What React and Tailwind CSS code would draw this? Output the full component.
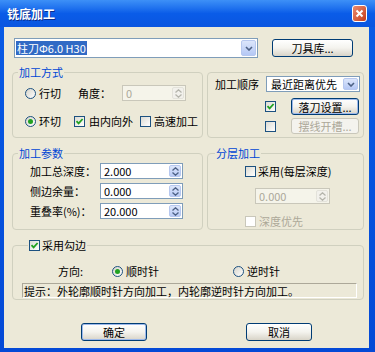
import React from "react";

const FONT = { fontFamily: '"Noto Sans CJK SC", "Noto Sans", sans-serif' };

function Radio({ checked, children, className = "" }) {
  return (
    <div className={"flex items-center gap-[3px] " + className}>
      <span className="w-[11px] h-[11px] rounded-full border border-[#1C5180] bg-gradient-to-br from-[#D6D4CA] to-white flex items-center justify-center shrink-0">
        {checked && <span className="w-[5px] h-[5px] rounded-full bg-[#21A121]" />}
      </span>
      <span>{children}</span>
    </div>
  );
}

function Check({ checked, disabled }) {
  return (
    <span
      className={
        "w-[11px] h-[11px] border flex items-center justify-center shrink-0 " +
        (disabled
          ? "border-[#C9C7BA] bg-white"
          : "border-[#1C5180] bg-gradient-to-br from-[#DCDBD3] to-white")
      }
    >
      {checked && (
        <svg width="9" height="9" viewBox="0 0 9 9">
          <path d="M1.5 4.2 L3.6 6.4 L7.6 2" fill="none" stroke="#21A121" strokeWidth="1.8" />
        </svg>
      )}
    </span>
  );
}

function SpinArrows({ disabled }) {
  const c = disabled ? "#B5B5AC" : "#4D6185";
  return (
    <div
      className={
        "w-[12px] h-full flex flex-col rounded-[2px] border " +
        (disabled ? "border-[#E3E2DA] bg-[#F2F1EC]" : "border-[#B7C8EF] bg-gradient-to-b from-[#DCE6FB] to-[#B9CBF5]")
      }
    >
      <div className="flex-1 flex items-center justify-center">
        <svg width="7" height="4" viewBox="0 0 7 4">
          <path d="M0.5 3.5 L3.5 0.8 L6.5 3.5" fill="none" stroke={c} strokeWidth="1.3" />
        </svg>
      </div>
      <div className="flex-1 flex items-center justify-center">
        <svg width="7" height="4" viewBox="0 0 7 4">
          <path d="M0.5 0.5 L3.5 3.2 L6.5 0.5" fill="none" stroke={c} strokeWidth="1.3" />
        </svg>
      </div>
    </div>
  );
}

function Spinner({ value, className = "", disabled }) {
  return (
    <div
      className={
        "h-[16px] flex items-stretch border p-[1px] " +
        (disabled ? "border-[#C9C7BA] bg-[#F5F4EA] text-[#ACA899]" : "border-[#7F9DB9] bg-white text-black") +
        " " +
        className
      }
    >
      <div className="flex-1 flex items-center pl-[2px] leading-[12px]">{value}</div>
      <SpinArrows disabled={disabled} />
    </div>
  );
}

function ComboArrow() {
  return (
    <div className="w-[15px] h-full rounded-[2px] border border-[#B7C8EF] bg-gradient-to-b from-[#DCE6FB] to-[#B5C8F5] flex items-center justify-center">
      <svg width="8" height="5" viewBox="0 0 8 5">
        <path d="M1 1 L4 4 L7 1" fill="none" stroke="#4D6185" strokeWidth="1.6" />
      </svg>
    </div>
  );
}

function Btn({ children, className = "", def, disabled }) {
  return (
    <div
      className={
        "flex items-center justify-center rounded-[3px] border leading-[12px] " +
        (disabled
          ? "border-[#C9C7BA] bg-[#F4F3EE] text-[#ACA899]"
          : "border-[#003C74] bg-gradient-to-b from-white via-[#F4F3EE] to-[#D8D4C8] text-black") +
        (def ? " shadow-[inset_0_0_0_1px_#9DB9EB]" : "") +
        " " +
        className
      }
    >
      {children}
    </div>
  );
}

export default function App() {
  return (
    <div
      className="w-[375px] h-[352px] bg-gradient-to-b from-[#0A5CE6] to-[#0449D6] flex flex-col text-[11px] leading-[12px] text-black overflow-hidden"
      style={FONT}
    >
      {/* Title bar */}
      <div className="h-[27px] shrink-0 flex items-center justify-between pl-[7px] pr-[8px] bg-gradient-to-b from-[#3D90F7] via-[#0A5CE8] to-[#0A55E0]">
        <span className="text-white font-bold text-[12px] leading-[14px] [text-shadow:1px_1px_0_#0A2C8C]">铣底加工</span>
        <div className="w-[15px] h-[17px] rounded-[3px] border border-white bg-gradient-to-br from-[#E98B6F] to-[#C63A12] flex items-center justify-center">
          <svg width="9" height="9" viewBox="0 0 9 9">
            <path d="M1.5 1.5 L7.5 7.5 M7.5 1.5 L1.5 7.5" stroke="white" strokeWidth="2" />
          </svg>
        </div>
      </div>

      {/* Client */}
      <div className="flex-1 ml-[4px] mr-[6px] mb-[4px] bg-[#ECE9D8] pl-[8px] pr-[5px] flex flex-col">
        {/* Tool row */}
        <div className="flex items-center mt-[11px] h-[20px]">
          <div className="ml-[2px] w-[244px] h-[20px] border border-[#7F9DB9] bg-white flex items-stretch p-[1px]">
            <div className="flex-1 flex items-center">
              <span className="bg-[#316AC5] text-white px-[1px] leading-[14px]">柱刀Φ6.0 H30</span>
            </div>
            <ComboArrow />
          </div>
          <Btn className="ml-[14px] w-[81px] h-[18px]">刀具库...</Btn>
        </div>

        {/* Row of groups 1 */}
        <div className="flex gap-[4px] mt-[8px]">
          <fieldset className="w-[191px] border border-[#D0D0BF] rounded-[4px] p-0">
            <legend className="text-[#0046D5] ml-[5px] px-[1px] leading-[12px]">加工方式</legend>
            <div className="pl-[12px] pr-[4px] pt-[7px] pb-[8px]">
              <div className="flex items-center h-[16px]">
                <Radio>行切</Radio>
                <span className="ml-[17px]">角度：</span>
                <Spinner value="0" disabled className="ml-[11px] w-[64px]" />
              </div>
              <div className="flex items-center h-[16px] mt-[12px]">
                <Radio checked>环切</Radio>
                <div className="flex items-center gap-[4px] ml-[13px]">
                  <Check checked />
                  <span>由内向外</span>
                </div>
                <div className="flex items-center gap-[3px] ml-[7px]">
                  <Check />
                  <span>高速加工</span>
                </div>
              </div>
            </div>
          </fieldset>

          <fieldset className="flex-1 border border-[#D0D0BF] rounded-[4px] mt-[6px] p-0">
            <div className="pl-[7px] pt-[3px] pb-[1px]">
              <div className="flex items-center h-[16px]">
                <span>加工顺序</span>
                <div className="ml-[7px] w-[94px] h-[16px] border border-[#7F9DB9] bg-white flex items-stretch p-[1px]">
                  <div className="flex-1 flex items-center pl-[3px]">最近距离优先</div>
                  <ComboArrow />
                </div>
              </div>
              <div className="flex items-center h-[17px] mt-[6px] pl-[50px]">
                <Check checked />
                <Btn def className="ml-[15px] w-[68px] h-[17px] border-[#1C3D72]">落刀设置...</Btn>
              </div>
              <div className="flex items-center h-[16px] mt-[3px] pl-[50px]">
                <Check />
                <Btn disabled className="ml-[15px] w-[68px] h-[16px]">摆线开槽...</Btn>
              </div>
            </div>
          </fieldset>
        </div>

        {/* Row of groups 2 */}
        <div className="flex gap-[4px] mt-[9px]">
          <fieldset className="w-[191px] border border-[#D0D0BF] rounded-[4px] p-0">
            <legend className="text-[#0046D5] ml-[5px] px-[1px] leading-[12px]">加工参数</legend>
            <div className="pl-[17px] pt-[4px] pb-[8px]">
              {[
                ["加工总深度：", "2.000"],
                ["侧边余量：", "0.000"],
                ["重叠率(%)：", "20.000"],
              ].map(([l, v], i) => (
                <div key={l} className={"flex items-center h-[16px] " + (i ? "mt-[4px]" : "")}>
                  <span className="w-[70px]">{l}</span>
                  <Spinner value={v} className="w-[83px]" />
                </div>
              ))}
            </div>
          </fieldset>

          <fieldset className="flex-1 border border-[#D0D0BF] rounded-[4px] p-0">
            <legend className="text-[#0046D5] ml-[7px] px-[1px] leading-[12px]">分层加工</legend>
            <div className="pl-[37px] pt-[6px] pb-[2px]">
              <div className="flex items-center h-[12px] gap-[2px]">
                <Check />
                <span>采用(每层深度)</span>
              </div>
              <Spinner value="0.000" disabled className="ml-[10px] mt-[11px] w-[75px]" />
              <div className="flex items-center h-[12px] gap-[3px] mt-[11px] text-[#ACA899]">
                <Check disabled />
                <span>深度优先</span>
              </div>
            </div>
          </fieldset>
        </div>

        {/* 勾边 group */}
        <fieldset className="mt-[9px] border border-[#D0D0BF] rounded-[4px] p-0">
          <legend className="ml-[15px] px-[1px] leading-[12px]">
            <div className="flex items-center gap-[2px]">
              <Check checked />
              <span>采用勾边</span>
            </div>
          </legend>
          <div className="pl-[9px] pr-[6px] pt-[13px] pb-[1px]">
            <div className="flex items-center h-[14px] pl-[36px]">
              <span className="w-[54px]">方向:</span>
              <Radio checked>顺时针</Radio>
              <Radio className="ml-[74px]">逆时针</Radio>
            </div>
            <div className="mt-[5px] h-[15px] border border-[#ACA899] border-b-white border-r-white bg-[#ECE9D8] flex items-center pl-[1px]">
              提示：外轮廓顺时针方向加工，内轮廓逆时针方向加工。
            </div>
          </div>
        </fieldset>

        {/* Buttons */}
        <div className="flex mt-[23px]">
          <Btn def className="ml-[69px] w-[66px] h-[18px]">确定</Btn>
          <Btn className="ml-[99px] w-[66px] h-[18px]">取消</Btn>
        </div>
      </div>
    </div>
  );
}
